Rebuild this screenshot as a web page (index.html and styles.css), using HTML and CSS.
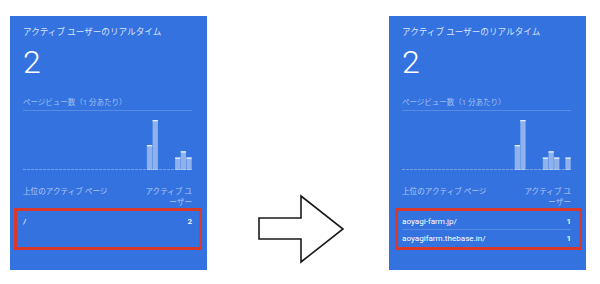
FILE: index.html
```html
<!DOCTYPE html>
<html lang="ja">
<head>
<meta charset="utf-8">
<link rel="stylesheet" href="styles.css">
</head>
<body>
<div class="stage">
  <section class="card">
    <div class="title">アクティブ ユーザーのリアルタイム</div>
    <div class="big">2</div>
    <div class="sub">ページビュー数（1 分あたり）</div>
    <svg class="chart" width="169" height="60" viewBox="0 0 169 60">
      <line class="base" x1="0" y1="58.5" x2="169" y2="58.5"/>
      <g class="bars">
        <rect x="123.9" y="34" width="5.3" height="25"/>
        <rect x="129.6" y="9" width="5.3" height="50"/>
        <rect x="152.1" y="46.5" width="5.3" height="12.5"/>
        <rect x="157.7" y="40.25" width="5.3" height="18.75"/>
        <rect x="163.4" y="46.5" width="5.3" height="12.5"/>
      </g>
      <g class="caps">
        <rect x="123.9" y="34" width="5.3" height="1.3"/>
        <rect x="129.6" y="9" width="5.3" height="1.3"/>
        <rect x="152.1" y="46.5" width="5.3" height="1.3"/>
        <rect x="157.7" y="40.25" width="5.3" height="1.3"/>
        <rect x="163.4" y="46.5" width="5.3" height="1.3"/>
      </g>
    </svg>
    <div class="head">
      <span class="hl">上位のアクティブ ページ</span>
      <span class="hr">アクティブ ユーザー</span>
    </div>
    <ul class="rows">
      <li class="row"><span>/</span><span class="val">2</span></li>
    </ul>
    <div class="mark mark-left"></div>
  </section>

  <div class="arrow">
    <svg width="182" height="254" viewBox="0 0 182 254">
      <polygon points="52,202 94,202 94,180 136,213 94,246 94,223 52,223" fill="#fff" stroke="#1a1a1a" stroke-width="1.6" stroke-linejoin="miter"/>
    </svg>
  </div>

  <section class="card">
    <div class="title">アクティブ ユーザーのリアルタイム</div>
    <div class="big">2</div>
    <div class="sub">ページビュー数（1 分あたり）</div>
    <svg class="chart" width="169" height="60" viewBox="0 0 169 60">
      <line class="base" x1="0" y1="58.5" x2="169" y2="58.5"/>
      <g class="bars">
        <rect x="112.7" y="34" width="5.3" height="25"/>
        <rect x="118.3" y="9" width="5.3" height="50"/>
        <rect x="140.8" y="46.5" width="5.3" height="12.5"/>
        <rect x="146.5" y="40.25" width="5.3" height="18.75"/>
        <rect x="152.1" y="46.5" width="5.3" height="12.5"/>
        <rect x="163.4" y="46.5" width="5.3" height="12.5"/>
      </g>
      <g class="caps">
        <rect x="112.7" y="34" width="5.3" height="1.3"/>
        <rect x="118.3" y="9" width="5.3" height="1.3"/>
        <rect x="140.8" y="46.5" width="5.3" height="1.3"/>
        <rect x="146.5" y="40.25" width="5.3" height="1.3"/>
        <rect x="152.1" y="46.5" width="5.3" height="1.3"/>
        <rect x="163.4" y="46.5" width="5.3" height="1.3"/>
      </g>
    </svg>
    <div class="head">
      <span class="hl">上位のアクティブ ページ</span>
      <span class="hr">アクティブ ユーザー</span>
    </div>
    <ul class="rows">
      <li class="row"><span>aoyagi-farm.jp/</span><span class="val">1</span></li>
      <li class="row"><span>aoyagifarm.thebase.in/</span><span class="val">1</span></li>
    </ul>
    <div class="mark mark-right"></div>
  </section>
</div>
</body>
</html>
```

FILE: styles.css
```css
html, body {
  margin: 0;
  padding: 0;
  background: #ffffff;
}

body {
  width: 600px;
  height: 284px;
  overflow: hidden;
  font-family: Roboto, "Noto Sans CJK JP", sans-serif;
}

.stage {
  display: flex;
  align-items: flex-start;
  padding: 16px 0 0 10px;
}

.card {
  position: relative;
  box-sizing: border-box;
  width: 197px;
  height: 254px;
  background: #3473df;
  padding: 11px 15px 0 13px;
  color: #ffffff;
  display: flex;
  flex-direction: column;
}

.title {
  font-size: 8.6px;
  line-height: 10px;
  color: rgba(255, 255, 255, 0.82);
  white-space: nowrap;
}

.big {
  margin-top: 9px;
  font-size: 32px;
  line-height: 32px;
  font-weight: 300;
  color: #ffffff;
}

.sub {
  margin-top: 20px;
  font-size: 7.5px;
  line-height: 10px;
  padding-bottom: 2px;
  border-bottom: 1px solid rgba(255, 255, 255, 0.18);
  color: rgba(255, 255, 255, 0.55);
  white-space: nowrap;
}

.chart {
  display: block;
}

.chart .base {
  stroke: rgba(255, 255, 255, 0.32);
  stroke-width: 1;
  stroke-dasharray: 3 1;
}

.chart .bars rect {
  fill: rgba(255, 255, 255, 0.45);
}

.chart .caps rect {
  fill: rgba(255, 255, 255, 0.8);
}

.head {
  margin-top: 16px;
  display: flex;
  justify-content: space-between;
  align-items: flex-start;
  font-size: 7.6px;
  line-height: 10.5px;
  color: rgba(255, 255, 255, 0.6);
}

.hl {
  white-space: nowrap;
}

.hr {
  width: 48px;
  text-align: right;
  line-break: loose;
}

.rows {
  list-style: none;
  margin: 4px 0 0 0;
  padding: 0;
}

.row {
  display: flex;
  justify-content: space-between;
  align-items: center;
  height: 17px;
  font-size: 8.1px;
  font-weight: 400;
  color: #ffffff;
}

.row .val {
  font-weight: 500;
}

.row + .row {
  border-top: 1px solid rgba(255, 255, 255, 0.16);
  height: 16px;
}

.mark {
  position: absolute;
  top: 192px;
  height: 42px;
  box-sizing: border-box;
  border: 3px solid #d8392b;
}

.mark-left {
  left: 4px;
  right: 5px;
}

.mark-right {
  left: 6px;
  right: 4px;
}

.arrow {
  width: 182px;
  height: 254px;
}

.arrow svg {
  display: block;
}
```
